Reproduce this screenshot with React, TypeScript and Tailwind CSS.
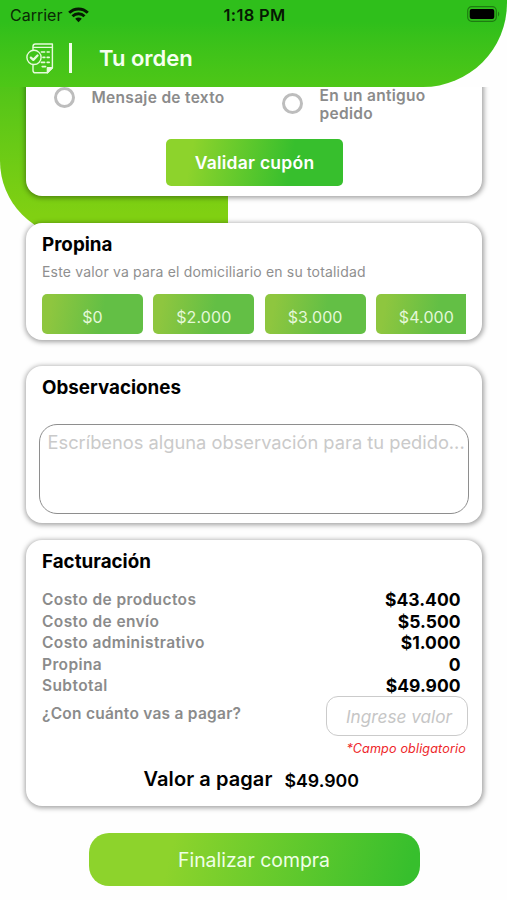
import { ReactNode } from 'react'
import clsx from 'clsx'

const tips = ['$0', '$2.000', '$3.000', '$4.000']

const costs = [
  { label: 'Costo de productos', value: '$43.400' },
  { label: 'Costo de envío', value: '$5.500' },
  { label: 'Costo administrativo', value: '$1.000' },
  { label: 'Propina', value: '0' },
  { label: 'Subtotal', value: '$49.900' },
]

const WifiIcon = () => (
  <svg width="21" height="16" viewBox="0 0 21 16" fill="none" stroke="#061a03" strokeWidth="2.9">
    <path d="M1.2 5.8C6.4.7 14.6.7 19.8 5.8" />
    <path d="M4.5 9.2c3.4-3.3 8.6-3.3 12 0" />
    <path d="M10.5 15.2l-3.3-3.4c1.9-1.8 4.7-1.8 6.6 0z" fill="#061a03" stroke="none" />
  </svg>
)

const BatteryIcon = () => (
  <svg width="33" height="16" viewBox="0 0 33 16">
    <rect x="0.7" y="0.7" width="28.6" height="14.6" rx="4" fill="none" stroke="#061a03" strokeOpacity="0.4" strokeWidth="1.2" />
    <rect x="2.7" y="2.9" width="24.6" height="10.2" rx="2" fill="#000" />
    <path d="M31 5.5c1.6.7 1.6 4.3 0 5z" fill="#061a03" fillOpacity="0.4" />
  </svg>
)

const OrderIcon = () => (
  <svg width="28" height="31" viewBox="0 0 28 31" fill="none" stroke="#e6fbdc" strokeWidth="1.4" strokeLinecap="round" strokeLinejoin="round">
    <path d="M7 7.2V3.4C7 1.8 7.8 1 9.3 1H26.4v23.8l-5 5H9.3c-1.5 0-2.3-.8-2.3-2.4v-5.6" />
    <path d="M7.4 4.4H26.4" />
    <path d="M21.4 29.8v-5h5z" fill="#e6fbdc" />
    <circle cx="8" cy="14.4" r="7.1" />
    <path d="M4.9 14.6l2.4 2.3 4.2-4.4" strokeWidth="2.3" />
    <path d="M15.4 9h3.2M21.2 9h2M17 14.4h1.8M21.2 14.4h2M15.4 19.4h3.2M21.2 19.4h2M16.2 23.6h3.4" strokeWidth="1.6" />
  </svg>
)

const Card = ({ className, children }: { className?: string; children: ReactNode }) => (
  <section
    className={clsx(
      'ml-[26px] w-[456.4px] rounded-2xl bg-white shadow-[0.5px_1px_5px_1px_rgba(0,0,0,0.36)]',
      className
    )}
  >
    {children}
  </section>
)

const CardTitle = ({ children }: { children: ReactNode }) => (
  <h2 className="text-[18.8px] leading-6 font-bold text-black">{children}</h2>
)

const Radio = () => <span className="h-[21px] w-[21px] shrink-0 rounded-full border-[3px] border-[#bdbdbd]" />

const App = () => {
  return (
    <div className="grid h-[900px] w-[507px] overflow-hidden bg-[#fefefe] font-['Inter',sans-serif]">
      {/* Green backdrop */}
      <div className="col-start-1 row-start-1 h-[237px] w-[228px] rounded-bl-[76px] bg-linear-to-b from-[#2fbf1b] from-10% to-[#80d012] to-90%" />

      <div className="col-start-1 row-start-1 flex h-[900px] flex-col">
        {/* Header */}
        <header className="h-[87px] shrink-0 rounded-br-[84px] bg-linear-to-b from-[#2fbf1b] from-25% to-[#4ec717]">
          <div className="flex h-[30px] items-center pr-2 pl-[10px]">
            <div className="flex flex-1 items-center gap-[6px]">
              <span className="text-[16px] text-[#0a2a05]">Carrier</span>
              <WifiIcon />
            </div>
            <span className="mr-[1px] text-[16.5px] font-semibold tracking-[0.3px] text-[#061a03]">1:18 PM</span>
            <div className="-mr-px flex flex-1 justify-end pb-[2px]">
              <BatteryIcon />
            </div>
          </div>
          <div className="flex h-14 items-center pl-[26px]">
            <OrderIcon />
            <span className="ml-[15px] h-[30px] w-[3px] bg-[#f1ffe9]" />
            <h1 className="ml-[27px] text-[22px] font-semibold text-[#f6fff0]">Tu orden</h1>
          </div>
        </header>

        <main className="flex flex-1 flex-col overflow-hidden">
          {/* Coupon */}
          <Card className="-mt-5 h-[129px] shrink-0 pt-5">
            <div className="flex h-9 pl-[27.5px] text-[15.5px] leading-[18px] font-semibold tracking-[0.3px] text-[#8b8b8b]">
              <div className="flex w-[228px] items-start gap-[17px]">
                <Radio />
                <span className="mt-[2px]">Mensaje de texto</span>
              </div>
              <div className="flex items-start gap-[17px]">
                <span className="mt-[6px] flex">
                  <Radio />
                </span>
                <span>
                  En un antiguo
                  <br />
                  pedido
                </span>
              </div>
            </div>
            <button className="mt-[15.5px] ml-[140px] h-[47px] w-[177px] rounded-[5px] bg-linear-[100deg] from-[#8dd32c] from-15% to-[#37bf2d] to-70% pt-[2px] text-[17.5px] font-semibold tracking-[0.25px] text-white">
              Validar cupón
            </button>
          </Card>

          {/* Tip */}
          <Card className="mt-[27px] h-[117px] shrink-0 pt-[10px] pl-4">
            <CardTitle>Propina</CardTitle>
            <p className="mt-[5px] text-[14px] leading-5 tracking-[0.18px] text-[#8f8f8f]">
              Este valor va para el domiciliario en su totalidad
            </p>
            <div className="mt-3 flex w-[424.4px] gap-[10.3px] overflow-hidden">
              {tips.map((tip) => (
                <button
                  key={tip}
                  className="h-10 w-[101px] shrink-0 rounded-[5px] bg-linear-[100deg] from-[#8ec63f] from-10% to-[#63bf45] to-60% pt-[6px] text-[16px] tracking-[0.1px] text-[#e4f8d8]"
                >
                  {tip}
                </button>
              ))}
            </div>
          </Card>

          {/* Notes */}
          <Card className="mt-[26px] h-[157px] shrink-0 pt-[10px]">
            <div className="pl-4">
              <CardTitle>Observaciones</CardTitle>
            </div>
            <textarea
              placeholder="Escríbenos alguna observación para tu pedido..."
              className="mt-6 ml-[12.5px] block h-[90px] w-[430.5px] resize-none overflow-hidden rounded-[18px] border-[1.5px] border-[#8e8e8e] px-2 py-[5px] text-[18.3px] leading-6 whitespace-nowrap placeholder:text-[#cacaca]"
            />
          </Card>

          {/* Billing */}
          <Card className="mt-[17px] h-[266px] shrink-0 pt-[10px] pl-4">
            <CardTitle>Facturación</CardTitle>
            <dl className="mt-[15px] w-[418.5px]">
              {costs.map(({ label, value }) => (
                <div key={label} className="flex h-[21.5px] items-center justify-between">
                  <dt className="text-[15.5px] font-semibold tracking-[0.4px] text-[#8b8b8b]">{label}</dt>
                  <dd className="pt-px text-[17.5px] font-bold text-black">{value}</dd>
                </div>
              ))}
            </dl>
            <div className="flex w-[426px] justify-between">
              <label className="mt-[5px] text-[15.5px] leading-6 font-semibold tracking-[0.25px] text-[#8b8b8b]">
                ¿Con cuánto vas a pagar?
              </label>
              <input
                placeholder="Ingrese valor"
                className="-mt-[0.5px] h-10 w-[142px] rounded-xl border-[1.5px] border-[#cbcbcb] pl-[19px] text-[17.2px] italic placeholder:text-[#c6c6c6]"
              />
            </div>
            <p className="mt-[3.5px] w-[424px] text-right text-[12.6px] leading-[18px] tracking-[0.15px] text-[#ee2529] italic">
              *Campo obligatorio
            </p>
            <div className="mt-2 flex gap-3 pl-[101.5px] leading-6 font-semibold text-black">
              <span className="mt-px text-[20px] tracking-[0.08px]">Valor a pagar</span>
              <span className="mt-[3px] text-[17.8px]">$49.900</span>
            </div>
          </Card>

          <button className="mt-[27px] ml-[88.5px] h-[53px] w-[331px] shrink-0 rounded-[20px] bg-linear-[104deg] from-[#8dd32c] from-25% to-[#37bf2d] to-96% pt-[2px] text-[19.4px] text-[#efffe6]">
            Finalizar compra
          </button>
        </main>
      </div>
    </div>
  )
}

export default App
